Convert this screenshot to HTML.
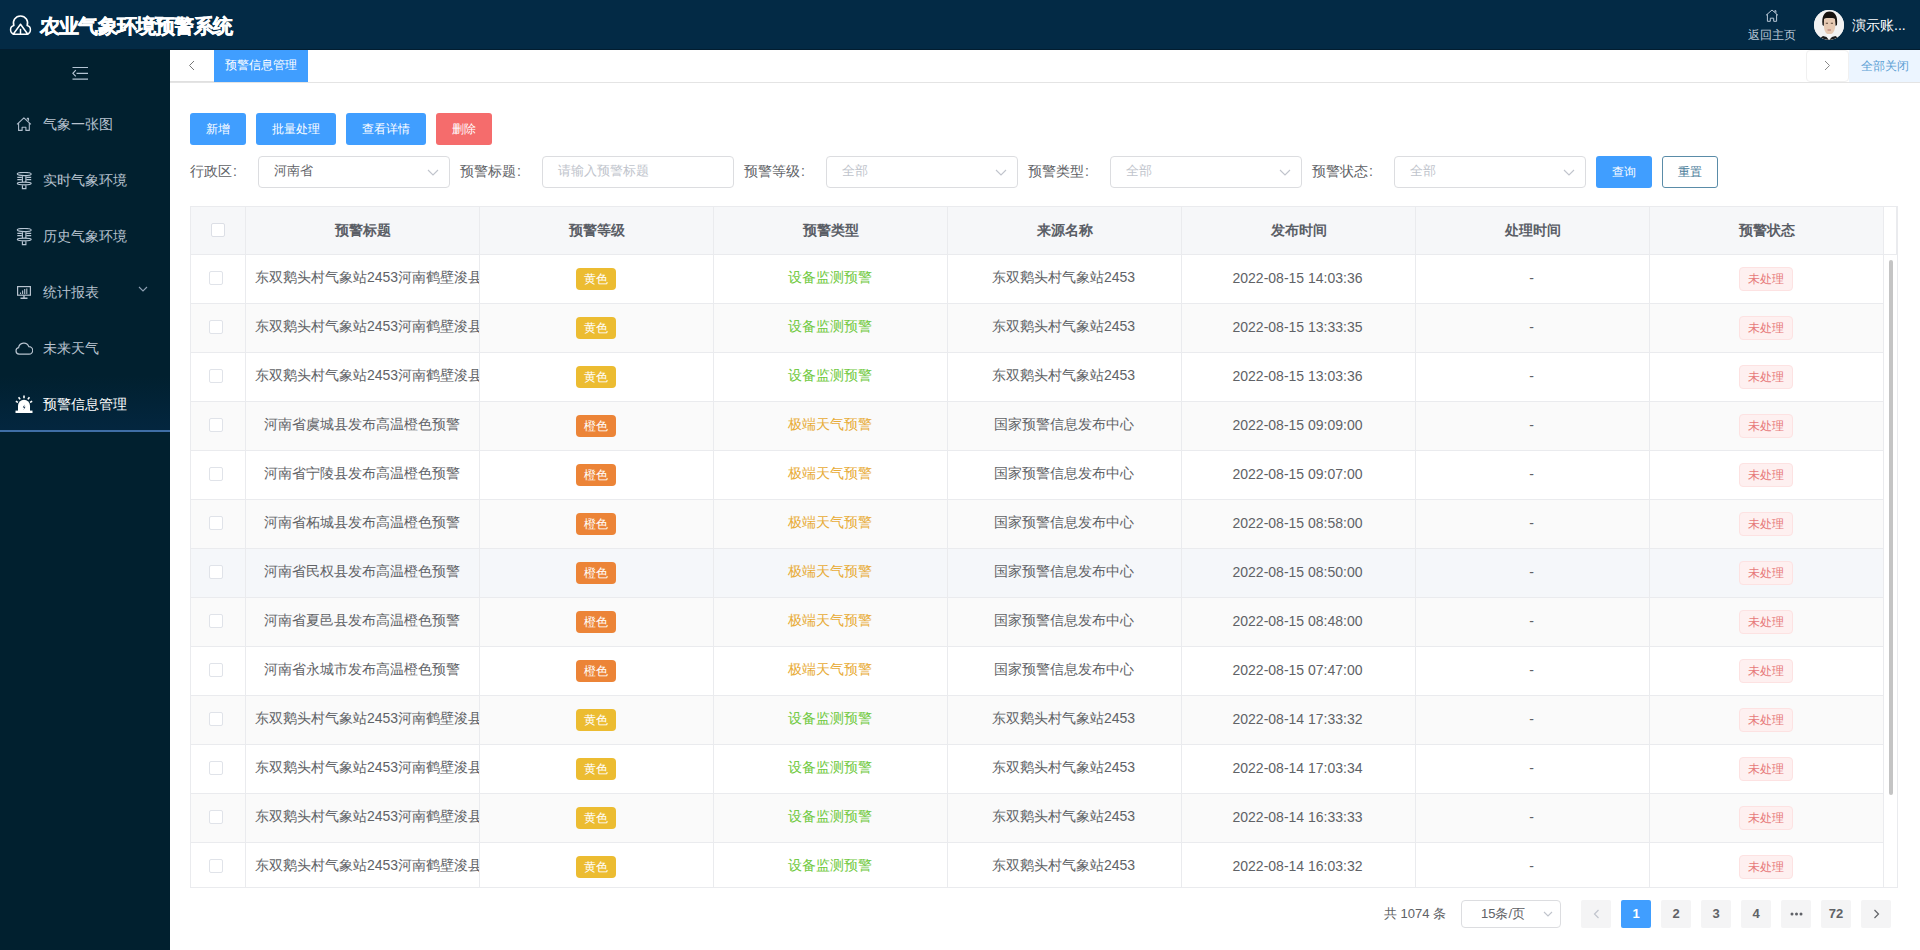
<!DOCTYPE html>
<html><head><meta charset="utf-8">
<style>
*{box-sizing:border-box;margin:0;padding:0}
html,body{width:1920px;height:950px;overflow:hidden;background:#fff;font-family:"Liberation Sans",sans-serif;}
.hdr{position:absolute;left:0;top:0;width:1920px;height:50px;background:#032a45;border-bottom:1px solid #021d30;color:#fff}
.logo{position:absolute;left:10px;top:14px;width:22px;height:22px;overflow:visible}
.title{position:absolute;left:40px;top:13px;font-size:20px;font-weight:700;-webkit-text-stroke:0.45px #fff;line-height:26px;letter-spacing:-0.8px}
.home{position:absolute;left:1745px;top:9px;width:54px;text-align:center;color:#b9c7d6;font-size:12px}
.home svg{display:block;margin:0 auto;}
.home span{display:block;line-height:14px;margin-top:6px}
.avatar{position:absolute;left:1814px;top:10px;width:30px;height:30px;border-radius:50%;background:#e9ecef;overflow:hidden}
.uname{position:absolute;left:1852px;top:16px;font-size:14px;line-height:18px;color:#fff}
.side{position:absolute;left:0;top:50px;width:170px;height:900px;background:#01202f}
.ham{position:absolute;left:72px;top:16px}
.mi{position:absolute;left:0;width:170px;height:56px;color:#b8c3cf;font-size:14px}
.mi .ic{position:absolute;left:16px;top:20px;width:16px;height:16px}
.mi .tx{position:absolute;left:43px;top:19px;line-height:18px}
.mi.act{background:linear-gradient(#01202f,#03263f);color:#fff;border-bottom:2px solid #3f6ea6}
.arr{position:absolute;left:138px;top:22px}
.main{position:absolute;left:170px;top:50px;width:1750px;height:900px;background:#fff}
.tabs{position:absolute;left:0;top:0;width:1750px;height:33px;border-bottom:1px solid #e4e4e4}
.tprev{position:absolute;left:0;top:0;width:44px;height:32px;background:#fff;border-bottom:1px solid #e0e0e0}
.tact{position:absolute;left:44px;top:0;width:94px;height:32px;background:#409eff;color:#fff;font-size:12px;line-height:31px;text-align:center}
.tnext{position:absolute;left:1636px;top:0;width:43px;height:32px;background:#fff;border:1px solid #f0f0f0;border-radius:4px}
.tclose{position:absolute;left:1679px;top:0;width:71px;height:32px;background:#ecf5ff;color:#5c9fd4;font-size:12px;line-height:33px;text-align:center}
.btn{position:absolute;top:63px;height:32px;border-radius:3px;color:#fff;font-size:12px;line-height:32px;text-align:center;background:#409eff}
.lbl{position:absolute;top:106px;height:32px;line-height:30px;font-size:14px;color:#606266}
.inp{position:absolute;top:106px;width:192px;height:32px;border:1px solid #dcdde0;border-radius:4px;font-size:13px;line-height:28px;padding-left:15px;color:#c0c4cc}
.inp.v{color:#606266}
.c{display:inline-block;width:14px;padding-left:1px}
.inp svg{position:absolute;right:10px;top:12px}
table{position:absolute;left:0;top:0;width:1706px;border-collapse:separate;border-spacing:0;table-layout:fixed;font-size:14px;color:#606266}
.tbl{position:absolute;left:20px;top:156px;width:1708px;height:682px;border:1px solid #eaebee;overflow:hidden}
td,th{border-right:1px solid #eaebee;border-bottom:1px solid #eaebee;text-align:center;white-space:nowrap;overflow:hidden;padding:0 10px}
th{height:48px;background:#f6f7f9;color:#5a5e66;font-weight:bold}
td{height:49px;padding:0 11px 2px 9px}
td.ck .cb{margin-left:-4px;border-color:#e0e3e9}
tr.st td{background:#fafafa}
tr.hv td{background:#f5f7fa}
.ck{padding:0}
.cb{display:inline-block;width:14px;height:14px;border:1px solid #dcdfe6;border-radius:2px;background:#fff;vertical-align:middle;position:relative;top:-2px}
.lv{display:inline-block;width:40px;height:22px;line-height:22px;border-radius:4px;color:#fff;font-size:12px;position:relative;top:1px}
.lv.y{background:#ecbc31}
.lv.o{background:#ec8437}
.g{color:#70c940}
.w{color:#e8ac38}
.stt{position:relative;top:1px;display:inline-block;width:54px;height:24px;line-height:22px;border:1px solid #fde2e2;background:#fef0f0;color:#e7797a;border-radius:4px;font-size:12px}
.sb{position:absolute;left:1719px;top:210px;width:4px;height:535px;background:#c4c4c4;border-radius:2px}
.pg{position:absolute;top:850px;height:28px;font-size:13px;color:#606266}
.pb{position:absolute;top:850px;width:30px;height:28px;background:#f4f4f5;color:#606266;font-size:13px;font-weight:bold;line-height:28px;text-align:center;border-radius:2px}
.pb.a{background:#409eff;color:#fff}
</style></head><body>
<div class="hdr">
  <svg class="logo" viewBox="0 0 22 22" fill="none" stroke="#fff" stroke-width="1.5" stroke-linejoin="round">
    <path d="M4.2 20.2 A4.4 4.4 0 0 1 3.9 11.6 A7.1 7.1 0 1 1 17.1 11.6 A4.4 4.4 0 0 1 16.8 20.2"/>
    <path d="M3.2 20.3 L10.5 10.2 L17.8 20.3 Z"/><path d="M10.5 14.8 V20.3"/>
  </svg>
  <div class="title">农业气象环境预警系统</div>
  <div class="home">
    <svg width="14" height="13" viewBox="0 0 14 13" fill="none" stroke="#b9c7d6" stroke-width="1" stroke-linejoin="round"><path d="M1 6.3 L7 1 L13 6.3 M2.4 5.2 V12.3 H5.3 V9.2 H8.7 V12.3 H11.6 V5.2 M9.8 2.8 V1.7 H10.9 V3.8"/></svg>
    <span>返回主页</span>
  </div>
  <div class="avatar"><svg width="30" height="30" viewBox="0 0 30 30"><rect width="30" height="30" fill="#f2f2f2"/><path d="M8.5 15 C7.5 6 10.5 1.5 15.5 1.5 C21 1.5 24 6 23 15 L21.5 16 L21 9 C18.5 7.5 12.5 7.5 10 9 L9.8 16 Z" fill="#17120e"/><path d="M10 9 C12.5 7.8 18.5 7.8 21 9 L21.2 17 C20.5 22 18 24.5 15.3 24.5 C12.5 24.5 10.5 22 10 17 Z" fill="#e6c9b2"/><path d="M11.8 13.2 H14 M16.8 13.2 H19" stroke="#5a4436" stroke-width="1.1"/><path d="M13.6 20 H17" stroke="#b0706a" stroke-width="1.1"/><path d="M3 30 L9 26 L12.5 27 L15 30 Z M27 30 L21.5 26 L18 27 L15 30 Z" fill="#1b1b1b"/><path d="M12 24 L15 30 L18.5 24 Z" fill="#f6f6f6"/></svg></div>
  <div class="uname">演示账...</div>
</div>
<div class="side">
  <svg class="ham" width="16" height="14" viewBox="0 0 16 14" fill="none" stroke="#b4c4d4" stroke-width="1.2"><path d="M0.5 1.5 H16 M4.5 7.3 H16 M0.5 13.2 H16 M3.8 4.2 L0.9 7.3 L3.8 10.4"/></svg>
  <div class="mi" style="top:46px"><svg class="ic" viewBox="0 0 16 16" fill="none" stroke="#aebccb" stroke-width="1.1" stroke-linejoin="round"><path d="M1 8.4 L7.9 1.9 L14.9 8.4 M2.6 7 V14.4 H6.1 V11.2 H9.9 V14.4 H13.3 V7 M11.3 3.6 V2.4 H12.5 V4.7"/></svg><span class="tx">气象一张图</span></div>
  <div class="mi" style="top:102px"><svg class="ic" style="left:16px;top:20px;width:17px;height:18px" viewBox="0 0 17 18" fill="none" stroke="#b8c6d4" stroke-width="1.15"><path d="M1.3 2 A6.95 1.6 0 1 0 15.2 2 A6.95 1.6 0 1 0 1.3 2 M6.4 3.6 V10.1 M9.9 3.6 V10.1 M1.3 5.4 H5.7 M10.6 5.4 H15.2 M1.3 7.6 H5.7 M10.6 7.6 H15.2 M1.3 11.5 A6.95 1.35 0 1 0 15.2 11.5 A6.95 1.35 0 1 0 1.3 11.5 M6.4 12.9 V16.6 H9.9 V12.9"/></svg><span class="tx">实时气象环境</span></div>
  <div class="mi" style="top:158px"><svg class="ic" style="left:16px;top:20px;width:17px;height:18px" viewBox="0 0 17 18" fill="none" stroke="#b8c6d4" stroke-width="1.15"><path d="M1.3 2 A6.95 1.6 0 1 0 15.2 2 A6.95 1.6 0 1 0 1.3 2 M6.4 3.6 V10.1 M9.9 3.6 V10.1 M1.3 5.4 H5.7 M10.6 5.4 H15.2 M1.3 7.6 H5.7 M10.6 7.6 H15.2 M1.3 11.5 A6.95 1.35 0 1 0 15.2 11.5 A6.95 1.35 0 1 0 1.3 11.5 M6.4 12.9 V16.6 H9.9 V12.9"/></svg><span class="tx">历史气象环境</span></div>
  <div class="mi" style="top:214px"><svg class="ic" style="left:17px;top:22px;width:14px;height:13px" viewBox="0 0 14 13" fill="none" stroke="#b8c3cf" stroke-width="1.2"><rect x="0.6" y="0.6" width="12.8" height="8.6"/><path d="M7 9.2 V11.6 M3.5 12.2 H10.5" stroke-width="1.4"/><path d="M3.5 8 V6.5 M5.6 8 V4.5 M7.7 8 V3 M9.8 8 V2.5" stroke-width="1.1"/></svg><span class="tx">统计报表</span>
    <svg class="arr" width="10" height="6" viewBox="0 0 10 6" fill="none" stroke="#8fa0b3" stroke-width="1.1"><path d="M1 1 L5 5 L9 1"/></svg></div>
  <div class="mi" style="top:270px"><svg class="ic" style="left:15px;top:21px;width:18px;height:14px" viewBox="0 0 18 14" fill="none" stroke="#b8c3cf" stroke-width="1.2"><path d="M4 13.2 A3.3 3.3 0 0 1 3.6 6.7 A5.3 5.3 0 0 1 13.8 5.6 A3.8 3.8 0 0 1 14 13.2 Z"/></svg><span class="tx">未来天气</span></div>
  <div class="mi act" style="top:326px"><svg class="ic" style="left:15px;top:19px;width:18px;height:18px" viewBox="0 0 18 18"><path d="M3 16 V10.8 A6 6 0 0 1 15 10.8 V16 Z" fill="#fff"/><rect x="0.5" y="15.6" width="17" height="2.4" fill="#fff"/><path d="M9.6 9.5 L7.8 12.5 H9.3 L8.5 15 L10.5 11.8 H9 Z" fill="#03213f"/><path d="M9 0.5 V3.2 M3.6 2.2 L5.1 4.4 M14.4 2.2 L12.9 4.4 M0.8 6.3 L3 7.4 M17.2 6.3 L15 7.4" stroke="#fff" stroke-width="1.6"/></svg><span class="tx">预警信息管理</span></div>
</div>
<div class="main">
  <div class="tabs"></div>
  <div class="tprev"><svg style="position:absolute;left:18px;top:10px" width="7" height="11" viewBox="0 0 7 11" fill="none" stroke="#777" stroke-width="1"><path d="M6 1 L1.5 5.5 L6 10"/></svg></div>
  <div class="tact">预警信息管理</div>
  <div class="tnext"><svg style="position:absolute;left:17px;top:9px" width="7" height="11" viewBox="0 0 7 11" fill="none" stroke="#8a8a8a" stroke-width="1"><path d="M1 1 L5.5 5.5 L1 10"/></svg></div>
  <div class="tclose">全部关闭</div>

  <div class="btn" style="left:20px;width:56px">新增</div>
  <div class="btn" style="left:86px;width:80px">批量处理</div>
  <div class="btn" style="left:176px;width:80px">查看详情</div>
  <div class="btn" style="left:266px;width:56px;background:#f56c6c">删除</div>

  <div class="lbl" style="left:20px">行政区<span class="c">:</span></div>
  <div class="inp v" style="left:88px">河南省<svg width="12" height="7" viewBox="0 0 12 7" fill="none" stroke="#c0c4cc" stroke-width="1.1"><path d="M1 1 L6 6 L11 1"/></svg></div>
  <div class="lbl" style="left:290px">预警标题<span class="c">:</span></div>
  <div class="inp" style="left:372px">请输入预警标题</div>
  <div class="lbl" style="left:574px">预警等级<span class="c">:</span></div>
  <div class="inp" style="left:656px">全部<svg width="12" height="7" viewBox="0 0 12 7" fill="none" stroke="#c0c4cc" stroke-width="1.1"><path d="M1 1 L6 6 L11 1"/></svg></div>
  <div class="lbl" style="left:858px">预警类型<span class="c">:</span></div>
  <div class="inp" style="left:940px">全部<svg width="12" height="7" viewBox="0 0 12 7" fill="none" stroke="#c0c4cc" stroke-width="1.1"><path d="M1 1 L6 6 L11 1"/></svg></div>
  <div class="lbl" style="left:1142px">预警状态<span class="c">:</span></div>
  <div class="inp" style="left:1224px">全部<svg width="12" height="7" viewBox="0 0 12 7" fill="none" stroke="#c0c4cc" stroke-width="1.1"><path d="M1 1 L6 6 L11 1"/></svg></div>
  <div class="btn" style="left:1426px;top:106px;width:56px">查询</div>
  <div class="btn" style="left:1492px;top:106px;width:56px;background:#fff;border:1px solid #5a8ca8;color:#4a7d9a;line-height:30px">重置</div>

  <div class="tbl">
  <table style="left:0;top:0">
    <colgroup><col style="width:55px"><col style="width:234px"><col style="width:234px"><col style="width:234px"><col style="width:234px"><col style="width:234px"><col style="width:234px"><col style="width:234px"><col style="width:13px"></colgroup>
    <tr><th class="ck"><i class="cb"></i></th><th>预警标题</th><th>预警等级</th><th>预警类型</th><th>来源名称</th><th>发布时间</th><th>处理时间</th><th>预警状态</th><th style="padding:0;background:#fff"></th></tr>
<tr class=""><td class="ck"><i class="cb"></i></td><td>东双鹅头村气象站2453河南鹤壁浚县发布设备监测预警</td><td><span class="lv y">黄色</span></td><td><span class="g">设备监测预警</span></td><td>东双鹅头村气象站2453</td><td class="tm">2022-08-15 14:03:36</td><td>-</td><td><span class="stt">未处理</span></td></tr>
<tr class="st"><td class="ck"><i class="cb"></i></td><td>东双鹅头村气象站2453河南鹤壁浚县发布设备监测预警</td><td><span class="lv y">黄色</span></td><td><span class="g">设备监测预警</span></td><td>东双鹅头村气象站2453</td><td class="tm">2022-08-15 13:33:35</td><td>-</td><td><span class="stt">未处理</span></td></tr>
<tr class=""><td class="ck"><i class="cb"></i></td><td>东双鹅头村气象站2453河南鹤壁浚县发布设备监测预警</td><td><span class="lv y">黄色</span></td><td><span class="g">设备监测预警</span></td><td>东双鹅头村气象站2453</td><td class="tm">2022-08-15 13:03:36</td><td>-</td><td><span class="stt">未处理</span></td></tr>
<tr class="st"><td class="ck"><i class="cb"></i></td><td>河南省虞城县发布高温橙色预警</td><td><span class="lv o">橙色</span></td><td><span class="w">极端天气预警</span></td><td>国家预警信息发布中心</td><td class="tm">2022-08-15 09:09:00</td><td>-</td><td><span class="stt">未处理</span></td></tr>
<tr class=""><td class="ck"><i class="cb"></i></td><td>河南省宁陵县发布高温橙色预警</td><td><span class="lv o">橙色</span></td><td><span class="w">极端天气预警</span></td><td>国家预警信息发布中心</td><td class="tm">2022-08-15 09:07:00</td><td>-</td><td><span class="stt">未处理</span></td></tr>
<tr class="st"><td class="ck"><i class="cb"></i></td><td>河南省柘城县发布高温橙色预警</td><td><span class="lv o">橙色</span></td><td><span class="w">极端天气预警</span></td><td>国家预警信息发布中心</td><td class="tm">2022-08-15 08:58:00</td><td>-</td><td><span class="stt">未处理</span></td></tr>
<tr class="hv"><td class="ck"><i class="cb"></i></td><td>河南省民权县发布高温橙色预警</td><td><span class="lv o">橙色</span></td><td><span class="w">极端天气预警</span></td><td>国家预警信息发布中心</td><td class="tm">2022-08-15 08:50:00</td><td>-</td><td><span class="stt">未处理</span></td></tr>
<tr class="st"><td class="ck"><i class="cb"></i></td><td>河南省夏邑县发布高温橙色预警</td><td><span class="lv o">橙色</span></td><td><span class="w">极端天气预警</span></td><td>国家预警信息发布中心</td><td class="tm">2022-08-15 08:48:00</td><td>-</td><td><span class="stt">未处理</span></td></tr>
<tr class=""><td class="ck"><i class="cb"></i></td><td>河南省永城市发布高温橙色预警</td><td><span class="lv o">橙色</span></td><td><span class="w">极端天气预警</span></td><td>国家预警信息发布中心</td><td class="tm">2022-08-15 07:47:00</td><td>-</td><td><span class="stt">未处理</span></td></tr>
<tr class="st"><td class="ck"><i class="cb"></i></td><td>东双鹅头村气象站2453河南鹤壁浚县发布设备监测预警</td><td><span class="lv y">黄色</span></td><td><span class="g">设备监测预警</span></td><td>东双鹅头村气象站2453</td><td class="tm">2022-08-14 17:33:32</td><td>-</td><td><span class="stt">未处理</span></td></tr>
<tr class=""><td class="ck"><i class="cb"></i></td><td>东双鹅头村气象站2453河南鹤壁浚县发布设备监测预警</td><td><span class="lv y">黄色</span></td><td><span class="g">设备监测预警</span></td><td>东双鹅头村气象站2453</td><td class="tm">2022-08-14 17:03:34</td><td>-</td><td><span class="stt">未处理</span></td></tr>
<tr class="st"><td class="ck"><i class="cb"></i></td><td>东双鹅头村气象站2453河南鹤壁浚县发布设备监测预警</td><td><span class="lv y">黄色</span></td><td><span class="g">设备监测预警</span></td><td>东双鹅头村气象站2453</td><td class="tm">2022-08-14 16:33:33</td><td>-</td><td><span class="stt">未处理</span></td></tr>
<tr class=""><td class="ck"><i class="cb"></i></td><td>东双鹅头村气象站2453河南鹤壁浚县发布设备监测预警</td><td><span class="lv y">黄色</span></td><td><span class="g">设备监测预警</span></td><td>东双鹅头村气象站2453</td><td class="tm">2022-08-14 16:03:32</td><td>-</td><td><span class="stt">未处理</span></td></tr>
  </table>
  </div>
  <div class="sb"></div>

  <div class="pg" style="left:1214px;line-height:28px">共 1074 条</div>
  <div class="inp v" style="left:1291px;top:850px;width:100px;height:28px;line-height:26px;padding-left:19px;font-size:13px">15条/页<svg style="top:10px;right:7px" width="10" height="6" viewBox="0 0 10 6" fill="none" stroke="#c0c4cc" stroke-width="1.1"><path d="M1 1 L5 5 L9 1"/></svg></div>
  <div class="pb" style="left:1411px"><svg style="margin-top:9px" width="7" height="10" viewBox="0 0 7 10" fill="none" stroke="#c0c4cc" stroke-width="1.2"><path d="M5.5 1 L1.5 5 L5.5 9"/></svg></div>
  <div class="pb a" style="left:1451px">1</div>
  <div class="pb" style="left:1491px">2</div>
  <div class="pb" style="left:1531px">3</div>
  <div class="pb" style="left:1571px">4</div>
  <div class="pb" style="left:1611px"><svg style="display:block;margin:12px auto 0" width="13" height="4" viewBox="0 0 13 4" fill="#5f6167"><circle cx="2" cy="2" r="1.5"/><circle cx="6.5" cy="2" r="1.5"/><circle cx="11" cy="2" r="1.5"/></svg></div>
  <div class="pb" style="left:1651px">72</div>
  <div class="pb" style="left:1691px"><svg style="margin-top:9px" width="7" height="10" viewBox="0 0 7 10" fill="none" stroke="#606266" stroke-width="1.2"><path d="M1.5 1 L5.5 5 L1.5 9"/></svg></div>
</div>
</body></html>
